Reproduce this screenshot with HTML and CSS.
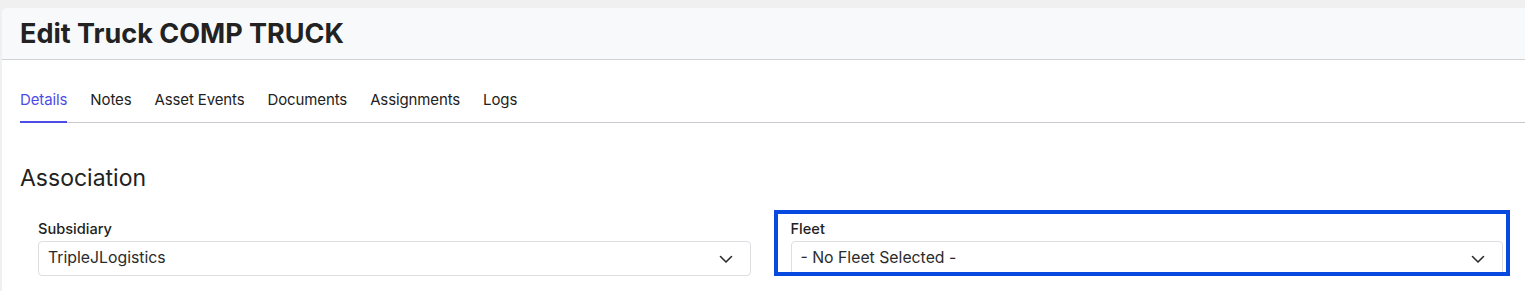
FILE: index.html
```html
<!DOCTYPE html>
<html lang="en">
<head>
    <meta charset="UTF-8">
    <meta name="viewport" content="width=device-width, initial-scale=1.0">
    <title>Edit Truck COMP TRUCK</title>
    <link rel="stylesheet" href="styles.css">
</head>
<body>
    <div class="page">
        <div class="page-header">
            <h1>Edit Truck COMP TRUCK</h1>
        </div>

        <div class="page-body">
            <nav class="tabs">
                <a class="tab active" href="#">Details</a>
                <a class="tab" href="#">Notes</a>
                <a class="tab" href="#">Asset Events</a>
                <a class="tab" href="#">Documents</a>
                <a class="tab" href="#">Assignments</a>
                <a class="tab" href="#">Logs</a>
            </nav>

            <h2 class="section-title">Association</h2>

            <div class="field-row">
                <div class="field">
                    <label class="field-label">Subsidiary</label>
                    <div class="select">
                        <span>TripleJLogistics</span>
                        <svg class="chevron" viewBox="0 0 16 16" width="16" height="16">
                            <path d="M2.5 5.5 L8 11 L13.5 5.5" fill="none" stroke="#2b2b2b" stroke-width="1.6" stroke-linecap="round" stroke-linejoin="round"/>
                        </svg>
                    </div>
                </div>
                <div class="field">
                    <label class="field-label">Fleet</label>
                    <div class="select">
                        <span>- No Fleet Selected -</span>
                        <svg class="chevron" viewBox="0 0 16 16" width="16" height="16">
                            <path d="M2.5 5.5 L8 11 L13.5 5.5" fill="none" stroke="#2b2b2b" stroke-width="1.6" stroke-linecap="round" stroke-linejoin="round"/>
                        </svg>
                    </div>
                    <div class="highlight"></div>
                </div>
            </div>
        </div>
    </div>
</body>
</html>
```

FILE: styles.css
```css
* {
    margin: 0;
    padding: 0;
    box-sizing: border-box;
}

body {
    font-family: Inter, 'Noto Sans', 'Liberation Sans', sans-serif;
    background: #f0f0f1;
    color: #222;
    padding: 8px 0 0 2px;
    min-height: 100vh;
}

.page {
    background: #fff;
    border-top-left-radius: 6px;
    min-height: 283px;
    overflow: hidden;
}

.page-header {
    background: #f8f9fa;
    height: 52px;
    padding: 0 18px;
    display: flex;
    align-items: center;
    border-bottom: 1px solid #d2d2d6;
}

.page-header h1 {
    font-size: 27px;
    font-weight: 700;
    color: #222;
}

.page-body {
    padding-left: 18px;
}

.tabs {
    display: flex;
    gap: 23px;
    margin-top: 20px;
    border-bottom: 1px solid #c9c9d1;
}

.tab {
    font-size: 15px;
    line-height: 22px;
    letter-spacing: -0.12px;
    color: #222;
    text-decoration: none;
    padding: 9px 0 10px;
    border-bottom: 2px solid transparent;
    margin-bottom: -1px;
}

.tab.active {
    color: #4d4de6;
    border-bottom-color: #4d4de6;
}

.section-title {
    font-size: 23px;
    font-weight: 400;
    line-height: 28px;
    color: #222;
    margin-top: 41px;
}

.field-row {
    display: grid;
    grid-template-columns: 1fr 1fr;
    gap: 40px;
    padding: 0 22px 0 18px;
    margin-top: 27px;
}

.field {
    position: relative;
}

.field-label {
    display: block;
    font-size: 14.6px;
    font-weight: 450;
    line-height: 20px;
    color: #222;
    margin-bottom: 2px;
}

.select {
    height: 35px;
    border: 1px solid #dedee2;
    border-radius: 4px;
    display: flex;
    align-items: center;
    justify-content: space-between;
    padding: 0 16px 0 9px;
    font-size: 15.8px;
    color: #2b2b2b;
    background: #fff;
}

.select span {
    margin-top: -2px;
}

.chevron {
    display: block;
}

.highlight {
    position: absolute;
    left: -17px;
    top: -9px;
    right: -7px;
    bottom: 0;
    border: 4px solid #0849e0;
    pointer-events: none;
}
```
